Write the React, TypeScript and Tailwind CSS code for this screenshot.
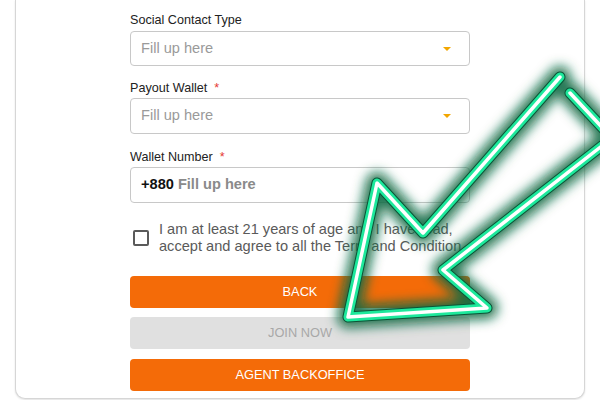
import React from "react";

const Caret = () => (
  <svg width="10" height="6" viewBox="0 0 10 6" className="absolute right-[17px] top-1/2 -translate-y-1/2">
    <path d="M1 1 L9 1 L5 5 Z" fill="#f2a600" />
  </svg>
);

const Label = ({ text, req }: { text: string; req?: boolean }) => (
  <div className="h-[16px] text-[12.6px] leading-[16px] text-[#222] whitespace-nowrap">
    {text}
    {req && <span className="ml-[7px] text-[#e53935]">*</span>}
  </div>
);

const arrowPts = "560,77 423,233 377,183 348,317 487,308 443,270 612,138 570,93";

export default function App() {
  return (
    <div
      className="relative w-[600px] h-[400px] overflow-hidden bg-white"
      style={{ fontFamily: '"Liberation Sans", Arial, sans-serif' }}
    >
      <div className="mx-[15px] h-[399px] w-[570px] rounded-b-[10px] border-x border-b border-[#d6d6d6] bg-white shadow-[0_1px_2px_rgba(0,0,0,0.12)] flex justify-center items-start">
        <div className="w-[340px] pt-[12px] flex flex-col">
          <Label text="Social Contact Type" />
          <div className="relative mt-[3px] h-[35px] shrink-0 rounded-[4px] border border-[#c8c8c8] flex items-center pl-[10px] text-[14.6px] text-[#9a9a9a]">
            Fill up here
            <Caret />
          </div>

          <div className="mt-[14px]">
            <Label text="Payout Wallet" req />
          </div>
          <div className="relative mt-[2px] h-[36px] shrink-0 rounded-[4px] border border-[#c8c8c8] flex items-center pl-[10px] text-[14.6px] text-[#9a9a9a]">
            Fill up here
            <Caret />
          </div>

          <div className="mt-[15px]">
            <Label text="Wallet Number" req />
          </div>
          <div className="relative mt-[2px] h-[36px] shrink-0 rounded-[4px] border border-[#c8c8c8] flex items-center pl-[10px] text-[14.6px] font-semibold">
            <span className="text-[#111]">+880</span>
            <span className="ml-[4px] text-[#8a8a8a]">Fill up here</span>
          </div>

          <div className="mt-[18px] flex items-center">
            <div className="ml-[3px] h-[16px] w-[16px] shrink-0 rounded-[2px] border-2 border-[#5a5a5a]" />
            <div className="ml-[10px] text-[14.6px] leading-[17px] text-[#5a5a5a] whitespace-nowrap">
              I am at least 21 years of age and I have read,
              <br />
              accept and agree to all the Term and Condition
            </div>
          </div>

          <button className="mt-[21px] h-[32px] shrink-0 w-full rounded-[4px] bg-[#f46b08] text-[12.8px] text-white">
            BACK
          </button>
          <button className="mt-[9px] h-[32px] shrink-0 w-full rounded-[4px] bg-[#e0e0e0] text-[12.8px] text-[#a8a8a8]">
            JOIN NOW
          </button>
          <button className="mt-[10px] h-[32px] shrink-0 w-full rounded-[4px] bg-[#f46b08] text-[12.8px] text-white">
            AGENT BACKOFFICE
          </button>
        </div>
      </div>

      <svg className="pointer-events-none absolute inset-0" width="600" height="400" viewBox="0 0 600 400">
        <defs>
          <filter id="glow" x="-20%" y="-20%" width="140%" height="140%">
            <feGaussianBlur stdDeviation="6" />
          </filter>
        </defs>
        <polyline points={arrowPts} fill="none" stroke="#0d6a44" strokeOpacity="0.9" strokeWidth="22" strokeLinejoin="round" strokeLinecap="round" filter="url(#glow)" />
        <polyline points={arrowPts} fill="none" stroke="#0b5436" strokeWidth="11" strokeLinejoin="round" strokeLinecap="round" />
        <polyline points={arrowPts} fill="none" stroke="#1ee89c" strokeWidth="9" strokeLinejoin="round" strokeLinecap="round" />
        <polyline points={arrowPts} fill="none" stroke="#ffffff" strokeWidth="3.5" strokeLinejoin="round" strokeLinecap="round" />
      </svg>
    </div>
  );
}
